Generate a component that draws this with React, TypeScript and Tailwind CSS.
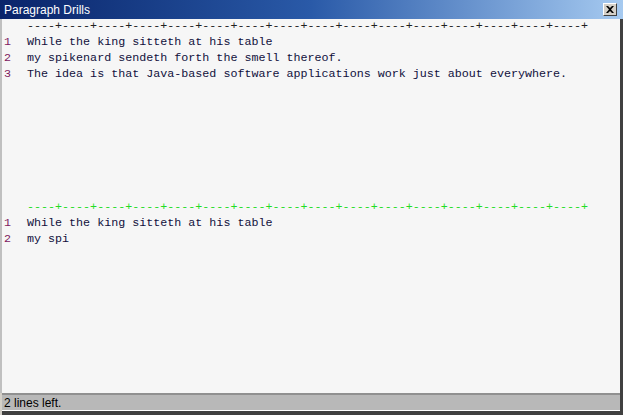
const ruler = "----+".repeat(16);

const top = [
  "While the king sitteth at his table",
  "my spikenard sendeth forth the smell thereof.",
  "The idea is that Java-based software applications work just about everywhere.",
];

const typed = ["While the king sitteth at his table", "my spi"];

const mono = { fontFamily: '"Liberation Mono", "Courier New", monospace' };

const Lines = ({ lines }: { lines: string[] }) => (
  <>
    {lines.map((line, i) => (
      <div key={i} className="flex h-4 items-center">
        <span className="w-[25px] pl-[2px] text-[#802060]">{i + 1}</span>
        <span className="whitespace-pre text-[#10103c]">{line}</span>
      </div>
    ))}
  </>
);

const App = () => {
  return (
    <div className="flex h-[415px] w-[623px] flex-col overflow-hidden bg-[#d4d0c8]">
      <div className="flex h-[19px] items-center justify-between bg-gradient-to-r from-[#0a246a] via-[#2a5aa8] to-[#a6caf0] pl-[4px] pr-[6px]">
        <span
          className="text-[12px] text-white"
          style={{ fontFamily: '"Liberation Sans", Arial, sans-serif' }}
        >
          Paragraph Drills
        </span>
        <div className="flex h-[13px] w-[14px] items-center justify-center border border-t-white border-l-white border-r-[#404040] border-b-[#404040] bg-[#d4d0c8]">
          <svg width="8" height="7" viewBox="0 0 8 7">
            <path d="M0 0 L2 0 L4 2 L6 0 L8 0 L5 3.5 L8 7 L6 7 L4 5 L2 7 L0 7 L3 3.5 Z" fill="#000" />
          </svg>
        </div>
      </div>

      <div className="flex flex-1 flex-col border-l-2 border-r-[3px] border-l-[#c0c0c0] border-r-[#404040] bg-[#f6f6f6] text-[11.7px]" style={mono}>
        <div className="h-[181px]">
          <div className="flex h-4 items-center pl-[25px] text-[#202020]">{ruler}</div>
          <Lines lines={top} />
        </div>
        <div className="flex-1">
          <div className="flex h-4 items-center pl-[25px] text-[#22dd22]">{ruler}</div>
          <Lines lines={typed} />
        </div>
      </div>

      <div className="flex h-[22px] flex-col border-r-[3px] border-r-[#404040] bg-[#d4d0c8] pl-[2px]">
        <div className="h-[2px] bg-[#909090]" />
        <div
          className="flex h-[16px] items-center border-b border-b-white bg-[#b8b8b8] pl-[2px] text-[12px] text-black"
          style={{ fontFamily: '"Liberation Sans", Arial, sans-serif' }}
        >
          2 lines left.
        </div>
        <div className="flex-1 bg-[#404040]" />
      </div>
    </div>
  );
};

export default App;
